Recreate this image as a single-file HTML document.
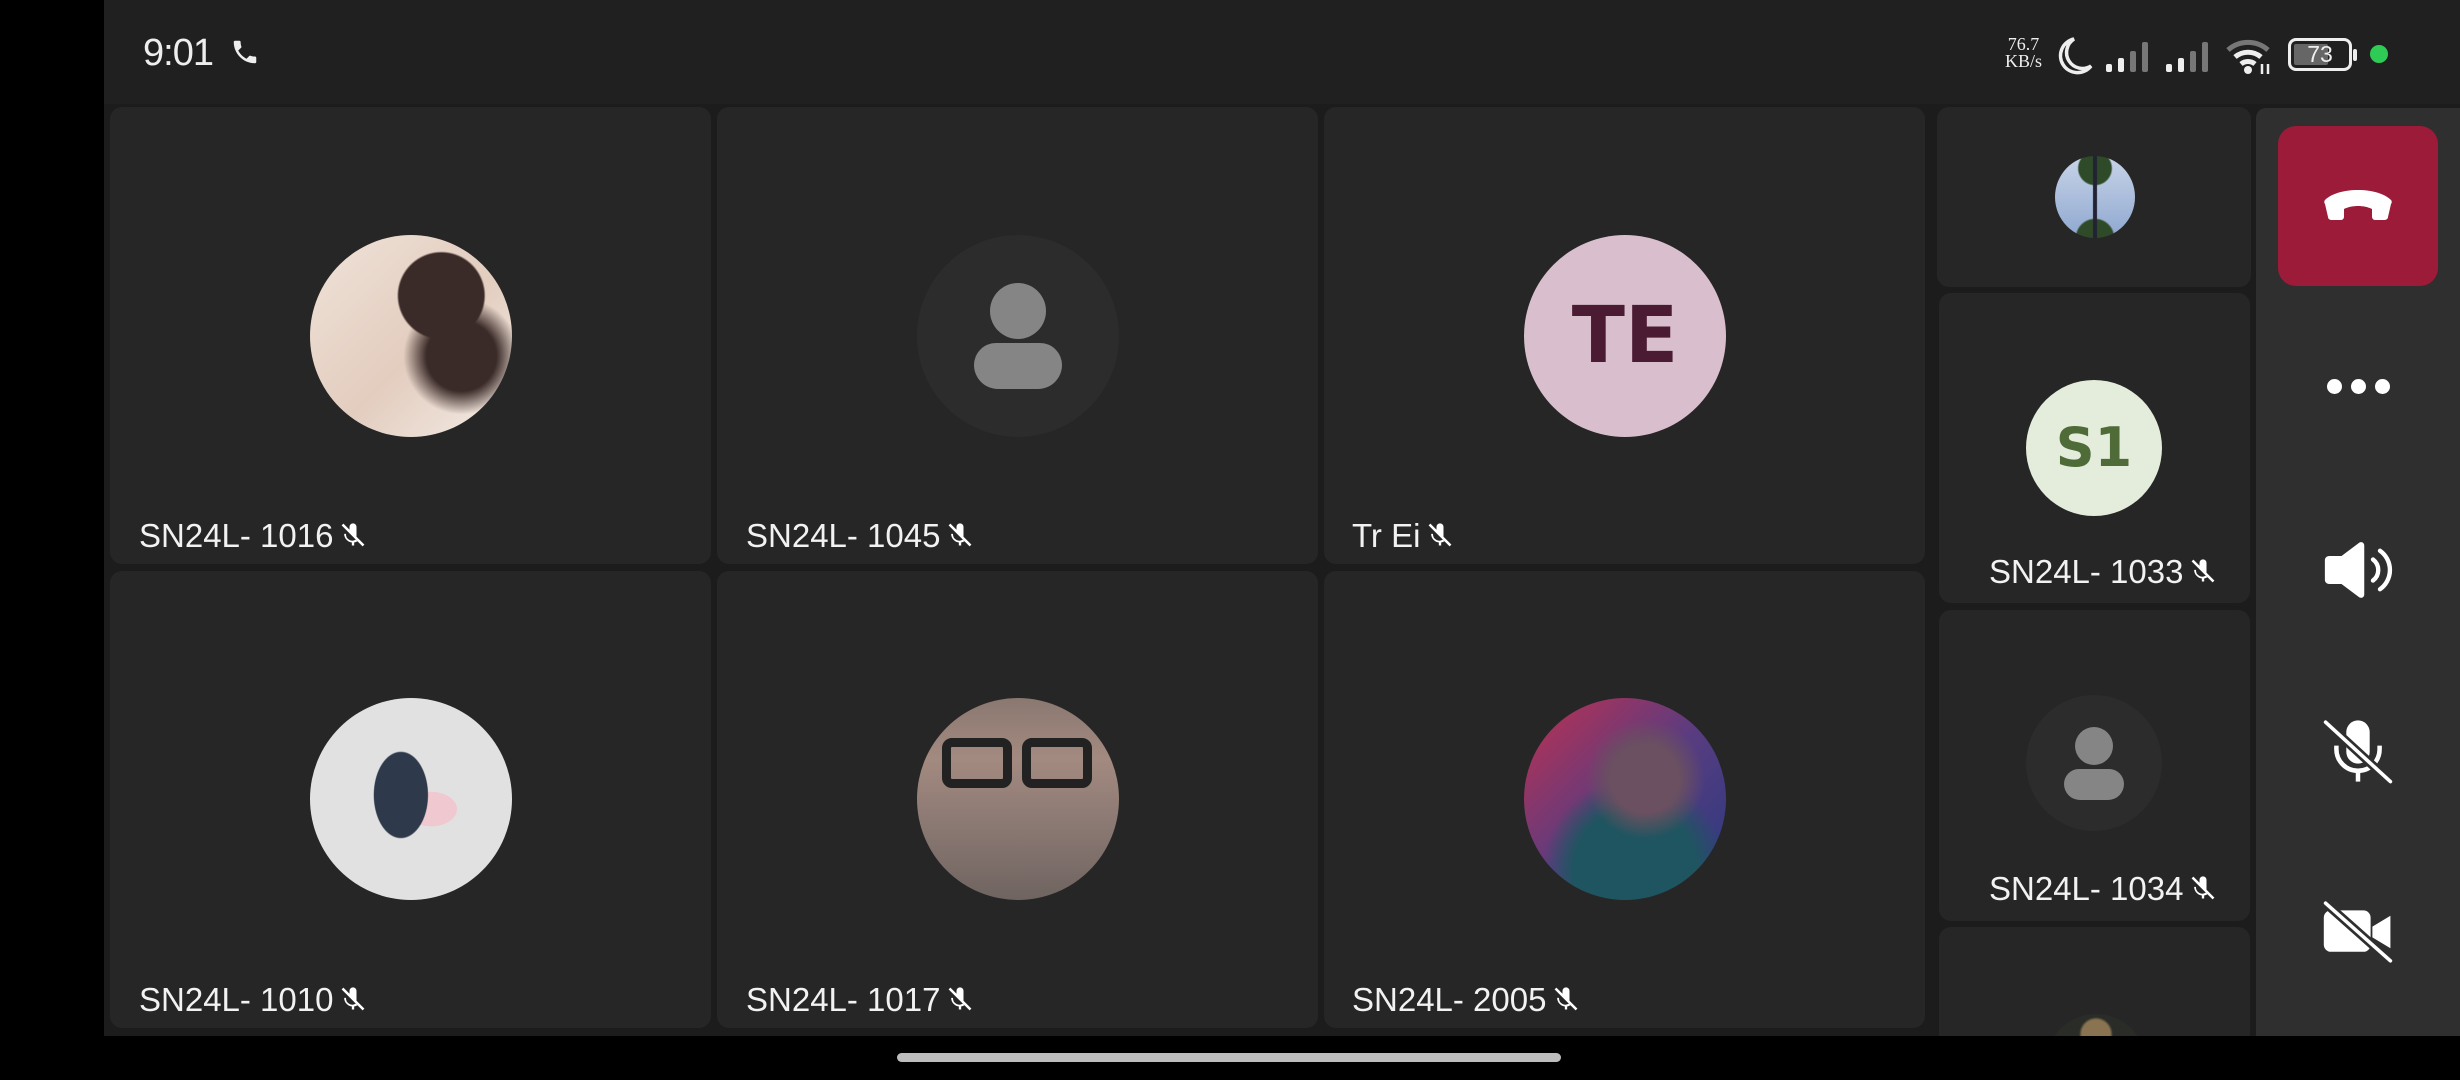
<!DOCTYPE html>
<html><head><meta charset="utf-8"><style>
*{margin:0;padding:0;box-sizing:border-box}
body{width:2460px;height:1080px;background:#000;position:relative;overflow:hidden;font-family:"Liberation Sans",Roboto,sans-serif;color:#fff}
.a{position:absolute}
.tile{position:absolute;background:#262626;border-radius:12px;overflow:hidden}
.av{position:absolute;border-radius:50%;overflow:hidden}
.lbl{position:absolute;font-size:33px;color:#f2f2f2;white-space:nowrap;line-height:1}
.lbl svg{vertical-align:-3px;margin-left:6px}
.ph{background:#2c2c2c}
</style></head><body>
<div class="a" style="left:104px;top:0;width:2356px;height:1036px;background:#1c1c1c"></div>
<div class="a" style="left:104px;top:0;width:2356px;height:104px;background:#202020"></div>
<div class="a" style="left:143px;top:32px;font-size:38px;color:#eee;letter-spacing:-1px">9:01</div>
<svg class="a" style="left:230px;top:37px" width="30" height="30" viewBox="0 0 24 24"><path fill="#eee" d="M6.6 10.8c1.4 2.8 3.8 5.1 6.6 6.6l2.2-2.2c.3-.3.7-.4 1-.2 1.1.4 2.3.6 3.6.6.6 0 1 .4 1 1V20c0 .6-.4 1-1 1C10.6 21 3 13.4 3 4c0-.6.4-1 1-1h3.5c.6 0 1 .4 1 1 0 1.3.2 2.5.6 3.6.1.3 0 .7-.2 1z"/></svg>
<!-- status right -->
<div class="a" style="left:2005px;top:36px;font-family:'Liberation Serif',serif;font-size:18px;line-height:17px;color:#eee;text-align:center">76.7<br>KB/s</div>
<svg class="a" style="left:2058px;top:36px" width="36" height="40" viewBox="0 0 36 40"><path d="M16 3A17 17 0 1 0 33 30 14 14 0 0 1 16 3z" fill="none" stroke="#eee" stroke-width="3.5"/></svg>
<svg class="a" style="left:2106px;top:40px" width="50" height="32" viewBox="0 0 50 32"><rect x="0" y="24" width="6" height="8" rx="2" fill="#eee"/><rect x="12" y="18" width="6" height="14" rx="2" fill="#eee"/><rect x="24" y="11" width="6" height="21" rx="2" fill="#777"/><rect x="36" y="2" width="6" height="30" rx="2" fill="#777"/></svg>
<svg class="a" style="left:2166px;top:40px" width="50" height="32" viewBox="0 0 50 32"><rect x="0" y="24" width="6" height="8" rx="2" fill="#eee"/><rect x="12" y="18" width="6" height="14" rx="2" fill="#eee"/><rect x="24" y="11" width="6" height="21" rx="2" fill="#777"/><rect x="36" y="2" width="6" height="30" rx="2" fill="#777"/></svg>
<svg class="a" style="left:2226px;top:36px" width="48" height="40" viewBox="0 0 48 40"><path d="M2 14a30 30 0 0 1 40 0" stroke="#777" stroke-width="5" fill="none"/><path d="M9 21a20 20 0 0 1 26 0" stroke="#eee" stroke-width="5" fill="none"/><path d="M15 28a11 11 0 0 1 14 0" stroke="#eee" stroke-width="5" fill="none"/><circle cx="22" cy="34" r="4" fill="#eee"/><path d="M36 28v10M42 28v10" stroke="#eee" stroke-width="2.5"/></svg>
<div class="a" style="left:2288px;top:38px;width:64px;height:33px;border:3px solid #eee;border-radius:8px"><div style="position:absolute;left:3px;top:3px;width:34px;height:21px;background:#666;border-radius:2px"></div><div style="position:absolute;left:0;top:0;width:58px;text-align:center;font-size:23px;line-height:27px;color:#eee">73</div></div>
<div class="a" style="left:2353px;top:49px;width:4px;height:12px;background:#eee;border-radius:2px"></div>
<div class="a" style="left:2370px;top:45px;width:18px;height:18px;background:#2ecc55;border-radius:50%"></div>

<!-- main tiles -->
<div class="tile" style="left:110px;top:107px;width:601px;height:457px"></div>
<div class="tile" style="left:717px;top:107px;width:601px;height:457px"></div>
<div class="tile" style="left:1324px;top:107px;width:601px;height:457px"></div>
<div class="tile" style="left:110px;top:571px;width:601px;height:457px"></div>
<div class="tile" style="left:717px;top:571px;width:601px;height:457px"></div>
<div class="tile" style="left:1324px;top:571px;width:601px;height:457px"></div>
<!-- avatars row1 -->
<div class="av" style="left:310px;top:235px;width:202px;height:202px;background:radial-gradient(circle at 65% 30%,#3a2a28 0 22%,transparent 23%),radial-gradient(circle at 75% 60%,#3a2a28 0 18%,transparent 30%),linear-gradient(135deg,#efe2d8,#e3cdbf 55%,#f3ece6)"></div>
<div class="av ph" style="left:917px;top:235px;width:202px;height:202px"><div class="a" style="left:73px;top:48px;width:56px;height:56px;border-radius:50%;background:#858585"></div><div class="a" style="left:57px;top:108px;width:88px;height:46px;border-radius:22px 22px 24px 24px;background:#858585"></div></div>
<div class="av" style="left:1524px;top:235px;width:202px;height:202px;background:#d9bfcd;color:#4b1b33;font-size:78px;text-align:center;line-height:202px;font-family:'DejaVu Sans',sans-serif;font-weight:bold">TE</div>
<!-- row2 -->
<div class="av" style="left:310px;top:698px;width:202px;height:202px;background:radial-gradient(ellipse 22% 35% at 45% 48%,#2e3a4c 0 60%,transparent 62%),radial-gradient(ellipse 18% 12% at 60% 55%,#f0c8d0 0 70%,transparent 72%),#e1e1e1"></div>
<div class="av" style="left:917px;top:698px;width:202px;height:202px;background:linear-gradient(180deg,#8a7870 0,#a38a80 30%,#8d7a74 60%,#6f6460);"><div class="a" style="left:25px;top:40px;width:70px;height:50px;border:9px solid #222;border-radius:10px"></div><div class="a" style="left:105px;top:40px;width:70px;height:50px;border:9px solid #222;border-radius:10px"></div></div>
<div class="av" style="left:1524px;top:698px;width:202px;height:202px;background:radial-gradient(circle at 60% 40%,#6a5060 0 20%,transparent 35%),radial-gradient(circle at 55% 85%,#1f5560 0 30%,transparent 45%),linear-gradient(135deg,#c03050,#5a3c80 50%,#263a80)"></div>
<!-- labels -->
<div class="lbl" style="left:139px;top:519px">SN24L- 1016<svg width="28" height="30" viewBox="0 0 24 24"><path fill="#fff" d="M12 2a3 3 0 0 0-3 3v4l6 6V5a3 3 0 0 0-3-3zM6 11h-1.6a7.6 7.6 0 0 0 6.6 7.4V21h2v-2.6c1-.1 2-.5 2.8-1l-1.4-1.4A5.5 5.5 0 0 1 6 11z"/><path d="M3 3l18 18" stroke="#fff" stroke-width="2.2"/></svg></div>
<div class="lbl" style="left:746px;top:519px">SN24L- 1045<svg width="28" height="30" viewBox="0 0 24 24"><path fill="#fff" d="M12 2a3 3 0 0 0-3 3v4l6 6V5a3 3 0 0 0-3-3zM6 11h-1.6a7.6 7.6 0 0 0 6.6 7.4V21h2v-2.6c1-.1 2-.5 2.8-1l-1.4-1.4A5.5 5.5 0 0 1 6 11z"/><path d="M3 3l18 18" stroke="#fff" stroke-width="2.2"/></svg></div>
<div class="lbl" style="left:1352px;top:519px">Tr Ei<svg width="28" height="30" viewBox="0 0 24 24"><path fill="#fff" d="M12 2a3 3 0 0 0-3 3v4l6 6V5a3 3 0 0 0-3-3zM6 11h-1.6a7.6 7.6 0 0 0 6.6 7.4V21h2v-2.6c1-.1 2-.5 2.8-1l-1.4-1.4A5.5 5.5 0 0 1 6 11z"/><path d="M3 3l18 18" stroke="#fff" stroke-width="2.2"/></svg></div>
<div class="lbl" style="left:139px;top:983px">SN24L- 1010<svg width="28" height="30" viewBox="0 0 24 24"><path fill="#fff" d="M12 2a3 3 0 0 0-3 3v4l6 6V5a3 3 0 0 0-3-3zM6 11h-1.6a7.6 7.6 0 0 0 6.6 7.4V21h2v-2.6c1-.1 2-.5 2.8-1l-1.4-1.4A5.5 5.5 0 0 1 6 11z"/><path d="M3 3l18 18" stroke="#fff" stroke-width="2.2"/></svg></div>
<div class="lbl" style="left:746px;top:983px">SN24L- 1017<svg width="28" height="30" viewBox="0 0 24 24"><path fill="#fff" d="M12 2a3 3 0 0 0-3 3v4l6 6V5a3 3 0 0 0-3-3zM6 11h-1.6a7.6 7.6 0 0 0 6.6 7.4V21h2v-2.6c1-.1 2-.5 2.8-1l-1.4-1.4A5.5 5.5 0 0 1 6 11z"/><path d="M3 3l18 18" stroke="#fff" stroke-width="2.2"/></svg></div>
<div class="lbl" style="left:1352px;top:983px">SN24L- 2005<svg width="28" height="30" viewBox="0 0 24 24"><path fill="#fff" d="M12 2a3 3 0 0 0-3 3v4l6 6V5a3 3 0 0 0-3-3zM6 11h-1.6a7.6 7.6 0 0 0 6.6 7.4V21h2v-2.6c1-.1 2-.5 2.8-1l-1.4-1.4A5.5 5.5 0 0 1 6 11z"/><path d="M3 3l18 18" stroke="#fff" stroke-width="2.2"/></svg></div>

<!-- right column (clipped) -->
<div class="a" style="left:1930px;top:104px;width:326px;height:932px;overflow:hidden">
<div style="position:absolute;left:-1930px;top:-104px;width:2460px;height:1080px">
<div class="tile" style="left:1937px;top:107px;width:314px;height:180px"></div>
<div class="tile" style="left:1939px;top:293px;width:311px;height:310px"></div>
<div class="tile" style="left:1939px;top:610px;width:311px;height:311px"></div>
<div class="tile" style="left:1939px;top:927px;width:311px;height:200px"></div>
<div class="av" style="left:2055px;top:156px;width:80px;height:82px;background:linear-gradient(90deg,transparent 47%,#223 48% 52%,transparent 53%),radial-gradient(circle at 50% 15%,#2f4a28 0 20%,transparent 22%),radial-gradient(circle at 50% 100%,#2f4a28 0 20%,transparent 22%),linear-gradient(180deg,#c8d4e8,#8fa8d0)"></div>
<div class="av" style="left:2026px;top:380px;width:136px;height:136px;background:#e4ecdb;color:#4f6b37;font-size:54px;text-align:center;line-height:136px;font-family:'DejaVu Sans',sans-serif;font-weight:bold">S1</div>
<div class="av ph" style="left:2026px;top:695px;width:136px;height:136px"><div class="a" style="left:49px;top:32px;width:38px;height:38px;border-radius:50%;background:#858585"></div><div class="a" style="left:38px;top:74px;width:60px;height:31px;border-radius:15px 15px 16px 16px;background:#858585"></div></div>
<div class="av" style="left:2046px;top:1014px;width:100px;height:100px;background:radial-gradient(circle at 50% 20%,#8a7350 0 15%,transparent 18%),#2a2c28"></div>
<div class="lbl" style="left:1989px;top:555px">SN24L- 1033<svg width="28" height="30" viewBox="0 0 24 24"><path fill="#fff" d="M12 2a3 3 0 0 0-3 3v4l6 6V5a3 3 0 0 0-3-3zM6 11h-1.6a7.6 7.6 0 0 0 6.6 7.4V21h2v-2.6c1-.1 2-.5 2.8-1l-1.4-1.4A5.5 5.5 0 0 1 6 11z"/><path d="M3 3l18 18" stroke="#fff" stroke-width="2.2"/></svg></div>
<div class="lbl" style="left:1989px;top:872px">SN24L- 1034<svg width="28" height="30" viewBox="0 0 24 24"><path fill="#fff" d="M12 2a3 3 0 0 0-3 3v4l6 6V5a3 3 0 0 0-3-3zM6 11h-1.6a7.6 7.6 0 0 0 6.6 7.4V21h2v-2.6c1-.1 2-.5 2.8-1l-1.4-1.4A5.5 5.5 0 0 1 6 11z"/><path d="M3 3l18 18" stroke="#fff" stroke-width="2.2"/></svg></div>
</div></div>

<!-- control panel -->
<div class="a" style="left:2256px;top:108px;width:204px;height:928px;background:#2f2f2f;border-radius:10px 0 0 0"></div>
<div class="a" style="left:2278px;top:126px;width:160px;height:160px;background:#9c1b39;border-radius:18px"></div>
<svg class="a" style="left:2323px;top:186px" width="70" height="40" viewBox="0 0 70 40"><path fill="#fff" d="M35 4C20 4 8 8 2 14c-1 1-1 3 0 4l3 13c0 2 2 3 4 3h9c2 0 3-2 3-3v-8c4-2 9-3 14-3s10 1 14 3v8c0 1 1 3 3 3h9c2 0 4-1 4-3l3-13c1-1 1-3 0-4C62 8 50 4 35 4z"/></svg>
<div class="a" style="left:2327px;top:379px;width:15px;height:15px;border-radius:50%;background:#fff"></div>
<div class="a" style="left:2351px;top:379px;width:15px;height:15px;border-radius:50%;background:#fff"></div>
<div class="a" style="left:2375px;top:379px;width:15px;height:15px;border-radius:50%;background:#fff"></div>
<svg class="a" style="left:2324px;top:538px" width="70" height="64" viewBox="0 0 80 64"><path fill="#fff" d="M6 16h14L40 1c3-2 6 0 6 3v56c0 3-3 5-6 3L20 48H6c-3 0-5-2-5-5V21c0-3 2-5 5-5z"/><path d="M56 20a15 15 0 0 1 0 24M64 10a27 27 0 0 1 0 44" stroke="#fff" stroke-width="5" stroke-linecap="round" fill="none"/></svg>
<svg class="a" style="left:2322px;top:716px" width="72" height="70" viewBox="0 0 80 72"><rect x="27" y="2" width="26" height="48" rx="13" fill="#fff"/><path d="M16 30v4a24 24 0 0 0 48 0v-4" stroke="#fff" stroke-width="5" fill="none"/><path d="M40 58v12" stroke="#fff" stroke-width="5"/><path d="M4 4l72 66" stroke="#2f2f2f" stroke-width="10"/><path d="M4 4l72 66" stroke="#fff" stroke-width="4" stroke-linecap="round"/></svg>
<svg class="a" style="left:2322px;top:899px" width="72" height="66" viewBox="0 0 80 68"><rect x="2" y="10" width="52" height="46" rx="8" fill="#fff"/><path d="M56 28l20-12v36L56 40z" fill="#fff"/><path d="M4 2l72 64" stroke="#2f2f2f" stroke-width="10"/><path d="M4 2l72 64" stroke="#fff" stroke-width="4" stroke-linecap="round"/></svg>

<div class="a" style="left:897px;top:1053px;width:664px;height:9px;background:#bdbdbd;border-radius:5px"></div>
</body></html>
